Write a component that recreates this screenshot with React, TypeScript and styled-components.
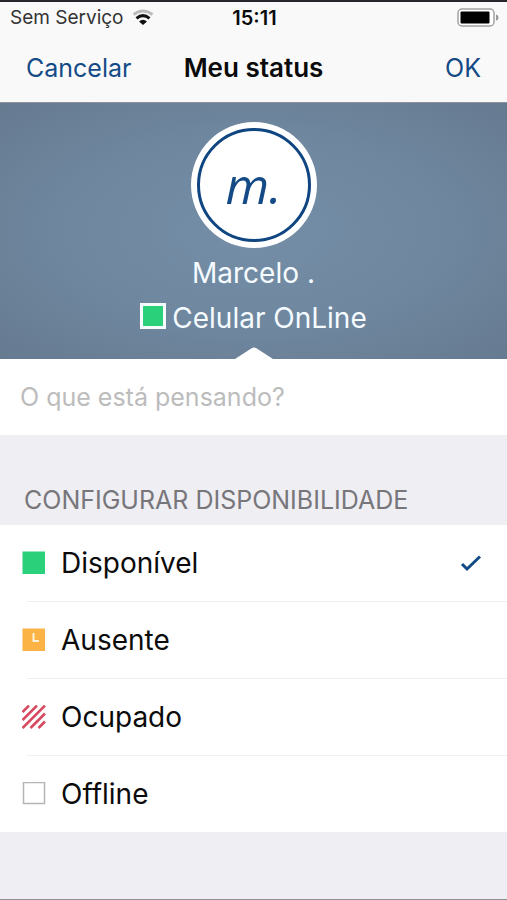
import { useState } from "react";
import type { ReactNode } from "react";
import styled, { createGlobalStyle } from "styled-components";

const blue = "#144b86";

const GlobalStyle = createGlobalStyle`
  * { box-sizing: border-box; }
  html, body { margin: 0; background: #eeeef3; }
  body { font-family: Inter, "Liberation Sans", sans-serif; color: #0b0b0b; }
  button, input { font: inherit; margin: 0; padding: 0; border: 0; background: none; }
`;

const Screen = styled.main`
  display: flex;
  flex-direction: column;
  min-height: 100vh;
  border-top: 2px solid #29262b;
  border-bottom: 1px solid #8f8d96;
  background: #eeeef3;
`;

const TopArea = styled.header`
  background: #f9f9f9;
  border-bottom: 1px solid #8d929b;
`;

const StatusBar = styled.div`
  display: grid;
  grid-template-columns: 1fr auto 1fr;
  align-items: center;
  height: 31px;
  padding: 0 8px 0 10px;
  font-size: 19px;
  line-height: 24px;
`;

const Carrier = styled.div`
  display: flex;
  align-items: center;
  gap: 8px;
  color: #333;
`;

const Clock = styled.time`
  font-size: 20px;
  font-weight: 600;
`;

const BatterySlot = styled.div`
  display: flex;
  justify-content: flex-end;
`;

const NavBar = styled.nav`
  display: grid;
  grid-template-columns: 1fr auto 1fr;
  align-items: center;
  height: 69px;
  padding: 0 26px;
  font-size: 25px;
  line-height: 32px;
`;

const NavButton = styled.button<{ $end?: boolean }>`
  justify-self: ${(p) => (p.$end ? "end" : "start")};
  color: ${blue};
  cursor: pointer;
`;

const Title = styled.h1`
  margin: 0;
  font-size: 26px;
  font-weight: 600;
`;

const Profile = styled.section`
  display: flex;
  flex-direction: column;
  align-items: center;
  padding-top: 19px;
  color: #f5fbff;
  font-size: 28px;
  line-height: 32px;
  background: radial-gradient(ellipse at 50% 50%, #758ea7 0%, #6f88a0 50%, #667a90 100%);
`;

const Avatar = styled.div`
  display: flex;
  width: 126px;
  height: 126px;
  padding: 6px;
  border-radius: 50%;
  background: #fff;
`;

const AvatarRing = styled.div`
  flex: 1;
  display: flex;
  align-items: center;
  justify-content: center;
  border: 3px solid #0f4580;
  border-radius: 50%;
  color: ${blue};
  font-family: "Open Sans", "Noto Sans", sans-serif;
  font-size: 50px;
  font-style: italic;
  line-height: 56px;
`;

const Name = styled.div`
  margin-top: 9px;
`;

const Presence = styled.div`
  display: flex;
  align-items: center;
  gap: 6px;
  margin-top: 13px;
`;

const PresenceMark = styled.span`
  width: 26px;
  height: 26px;
  margin-bottom: 5px;
  border: 3px solid #f5fbff;
  background: #2bd07a;
`;

const Pointer = styled.svg`
  display: block;
  margin-top: 13px;
`;

const Thought = styled.input`
  width: 100%;
  height: 76px;
  padding: 0 20px;
  border-radius: 0;
  background: #fff;
  font-size: 25px;
  &::placeholder { color: #bcbcbc; opacity: 1; }
`;

const Availability = styled.fieldset`
  min-width: 0;
  margin: 0;
  padding: 0;
  border: 0;
`;

const SectionTitle = styled.legend`
  padding: 49px 24px 9px;
  color: #77767b;
  font-size: 25px;
  line-height: 32px;
`;

const Options = styled.div`
  background: #fff;
`;

const Option = styled.label`
  display: grid;
  grid-template-columns: 24px 1fr 24px;
  align-items: center;
  column-gap: 15px;
  height: 76px;
  padding: 0 24px 0 22px;
  font-size: 28px;
  line-height: 36px;
  cursor: pointer;
`;

const Divider = styled.div`
  height: 1px;
  margin-left: 27px;
  background: #f0f0f2;
`;

const CheckSlot = styled.span`
  display: grid;
  place-items: center;
  & > * { grid-area: 1 / 1; }
  svg { visibility: hidden; }
  input:checked + svg { visibility: visible; }
`;

const Radio = styled.input`
  appearance: none;
  width: 24px;
  height: 24px;
`;

const WifiIcon = () => (
  <svg width="22" height="17" viewBox="0 0 22 17" aria-hidden="true">
    <path d="M1.500 5.500Q11-1.500 20.500 5.500" fill="none" stroke="#bbb" strokeWidth="2.800" />
    <path d="M4.500 9.300Q11 4 17.500 9.300" fill="none" stroke="#111" strokeWidth="3" />
    <path d="M7 12.500Q11 9 15 12.500L11 16Z" fill="#111" />
  </svg>
);

const BatteryIcon = () => (
  <svg width="42" height="19" viewBox="0 0 42 19" role="img" aria-label="Bateria">
    <rect x="1" y="1" width="36" height="17" rx="4" fill="#fff" stroke="#a1a1a1" strokeWidth="1.500" />
    <rect x="3.500" y="3.500" width="29" height="12" rx="1" fill="#000" />
    <path d="M39 6.500Q41.500 7 41.500 9.500T39 12.500Z" fill="#999" />
  </svg>
);

const AvailableIcon = () => (
  <svg width="24" height="24" aria-hidden="true">
    <rect x="0.500" y="0.500" width="22.500" height="22.500" fill="#2bd07a" />
  </svg>
);

const AwayIcon = () => (
  <svg width="24" height="24" aria-hidden="true">
    <rect x="0.500" y="0.500" width="22.500" height="22.500" fill="#fbb345" />
    <path d="M11.500 5V13H17" fill="none" stroke="#fff3d9" strokeWidth="2" />
  </svg>
);

const BusyIcon = () => (
  <svg width="24" height="24" aria-hidden="true">
    <path
      d="M0.500 7L7 0.500M0.500 15L15 0.500M0.500 23L23 0.500M8.500 23L23 8.500M16.500 23L23 16.500"
      fill="none"
      stroke="#d6495f"
      strokeWidth="2.500"
    />
  </svg>
);

const OfflineIcon = () => (
  <svg width="24" height="24" aria-hidden="true">
    <rect x="1.500" y="0.500" width="21" height="21" fill="#fff" stroke="#b5b5b5" strokeWidth="1.500" />
  </svg>
);

const CheckIcon = () => (
  <svg width="24" height="24" viewBox="0 0 24 24" aria-hidden="true">
    <path d="M3 13L8 18L21 5.500" fill="none" stroke={blue} strokeWidth="3" />
  </svg>
);

const choices: { id: string; label: string; icon: ReactNode }[] = [
  { id: "available", label: "Disponível", icon: <AvailableIcon /> },
  { id: "away", label: "Ausente", icon: <AwayIcon /> },
  { id: "busy", label: "Ocupado", icon: <BusyIcon /> },
  { id: "offline", label: "Offline", icon: <OfflineIcon /> },
];

export default function App() {
  const [selected, setSelected] = useState("available");
  const [thought, setThought] = useState("");

  return (
    <Screen>
      <GlobalStyle />
      <TopArea>
        <StatusBar>
          <Carrier>
            Sem Serviço <WifiIcon />
          </Carrier>
          <Clock>15:11</Clock>
          <BatterySlot>
            <BatteryIcon />
          </BatterySlot>
        </StatusBar>
        <NavBar>
          <NavButton type="button">Cancelar</NavButton>
          <Title>Meu status</Title>
          <NavButton type="button" $end>
            OK
          </NavButton>
        </NavBar>
      </TopArea>
      <Profile>
        <Avatar>
          <AvatarRing>m.</AvatarRing>
        </Avatar>
        <Name>Marcelo .</Name>
        <Presence>
          <PresenceMark />
          Celular OnLine
        </Presence>
        <Pointer width="38" height="12" aria-hidden="true">
          <path d="M0 12L17 1Q19 0 21 1L38 12Z" fill="#fff" />
        </Pointer>
      </Profile>
      <Thought
        type="text"
        aria-label="O que está pensando?"
        placeholder="O que está pensando?"
        value={thought}
        onChange={(e) => setThought(e.target.value)}
      />
      <Availability>
        <SectionTitle>CONFIGURAR DISPONIBILIDADE</SectionTitle>
        <Options>
          {choices.map((choice, i) => (
            <div key={choice.id}>
              {i > 0 && <Divider />}
              <Option>
                {choice.icon}
                {choice.label}
                <CheckSlot>
                  <Radio
                    type="radio"
                    name="availability"
                    checked={selected === choice.id}
                    onChange={() => setSelected(choice.id)}
                  />
                  <CheckIcon />
                </CheckSlot>
              </Option>
            </div>
          ))}
        </Options>
      </Availability>
    </Screen>
  );
}
